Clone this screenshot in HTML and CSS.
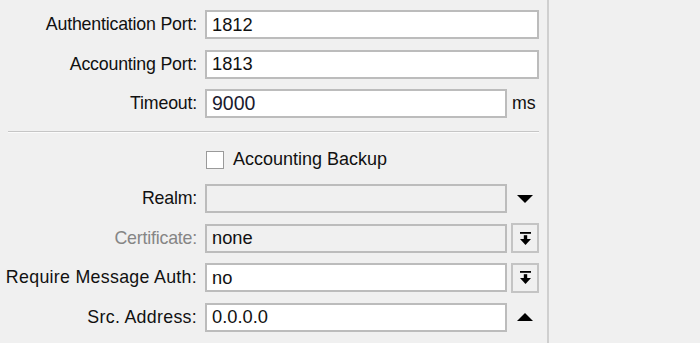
FILE: index.html
```html
<!DOCTYPE html>
<html>
<head>
<meta charset="utf-8">
<link rel="stylesheet" href="styles.css">
</head>
<body>
<div class="page">
  <div class="panel">
    <div class="rows top">
      <div class="row">
        <label class="lbl">Authentication Port:</label>
        <div class="field full">1812</div>
      </div>
      <div class="row">
        <label class="lbl">Accounting Port:</label>
        <div class="field full">1813</div>
      </div>
      <div class="row">
        <label class="lbl">Timeout:</label>
        <div class="field short"><span class="big">9000</span></div>
        <span class="unit">ms</span>
      </div>
    </div>
    <div class="sep"></div>
    <div class="check-row">
      <span class="box"></span>
      <span class="check-text">Accounting Backup</span>
    </div>
    <div class="rows bottom">
      <div class="row">
        <label class="lbl">Realm:</label>
        <div class="field short disabled"></div>
        <span class="suffix"><svg width="16" height="8" viewBox="0 0 16 8"><polygon points="0,0 16,0 8,8" fill="#000"/></svg></span>
      </div>
      <div class="row">
        <label class="lbl muted">Certificate:</label>
        <div class="field short disabled">none</div>
        <span class="btn"><svg width="11" height="13" viewBox="0 0 11 13"><rect x="0" y="0" width="11" height="1.8" fill="#000"/><rect x="3.8" y="3.2" width="3.4" height="4.3" fill="#000"/><polygon points="0,7 11,7 5.5,13" fill="#000"/></svg></span>
      </div>
      <div class="row">
        <label class="lbl wide">Require Message Auth:</label>
        <div class="field short">no</div>
        <span class="btn"><svg width="11" height="13" viewBox="0 0 11 13"><rect x="0" y="0" width="11" height="1.8" fill="#000"/><rect x="3.8" y="3.2" width="3.4" height="4.3" fill="#000"/><polygon points="0,7 11,7 5.5,13" fill="#000"/></svg></span>
      </div>
      <div class="row">
        <label class="lbl wide">Src. Address:</label>
        <div class="field short">0.0.0.0</div>
        <span class="suffix"><svg width="16" height="8" viewBox="0 0 16 8"><polygon points="0,8 16,8 8,0" fill="#000"/></svg></span>
      </div>
    </div>
  </div>
</div>
</body>
</html>
```

FILE: styles.css
```css
html, body {
  margin: 0;
  padding: 0;
  background: #f0f0f0;
}
body {
  font-family: "Liberation Sans", Arial, sans-serif;
  font-size: 17.8px;
  color: #111;
}
.page {
  width: 700px;
  height: 343px;
  overflow: hidden;
}
.panel {
  width: 549px;
  height: 343px;
  border-right: 2px solid #cfcfcf;
  box-sizing: border-box;
  padding-top: 10px;
}
.rows {
  display: flex;
  flex-direction: column;
  gap: 10.5px;
}
.rows.bottom {
  gap: 10.6px;
}
.row {
  display: flex;
  align-items: center;
  height: 29px;
}
.lbl {
  width: 197px;
  flex: none;
  text-align: right;
  padding-right: 8px;
  box-sizing: content-box;
  white-space: nowrap;
  letter-spacing: -0.2px;
}
.lbl.wide {
  letter-spacing: 0.3px;
}
.lbl.muted {
  color: #858585;
}
.field {
  height: 29px;
  box-sizing: border-box;
  border: 2px solid #bcbcbc;
  background: #fff;
  padding: 0 5px;
  display: flex;
  align-items: center;
  white-space: nowrap;
  flex: none;
  font-size: 18.3px;
}
.field.full {
  width: 334px;
}
.field.short {
  width: 302px;
}
.field.disabled {
  background: #f0f0f0;
}
.big {
  font-size: 19.5px;
  color: #1a1a2e;
}
.unit {
  margin-left: 5px;
}
.suffix {
  width: 28px;
  margin-left: 4px;
  display: flex;
  justify-content: center;
  align-items: center;
  height: 29px;
}
.btn {
  width: 28px;
  height: 30px;
  margin-left: 4px;
  box-sizing: border-box;
  border: 2px solid #c4c4c4;
  display: flex;
  justify-content: center;
  align-items: center;
}
.sep {
  margin: 13px 0 0 8px;
  width: 531px;
  height: 0;
  border-top: 1px solid #c6c6c6;
  border-bottom: 1px solid #fbfbfb;
}
.check-row {
  display: flex;
  align-items: center;
  height: 19px;
  margin-top: 17px;
  margin-bottom: 15px;
  padding-left: 206px;
}
.box {
  width: 18px;
  height: 18px;
  box-sizing: border-box;
  border: 1px solid #9a9a9a;
  background: #fff;
  flex: none;
}
.check-text {
  margin-left: 9px;
  font-size: 18px;
}
```
